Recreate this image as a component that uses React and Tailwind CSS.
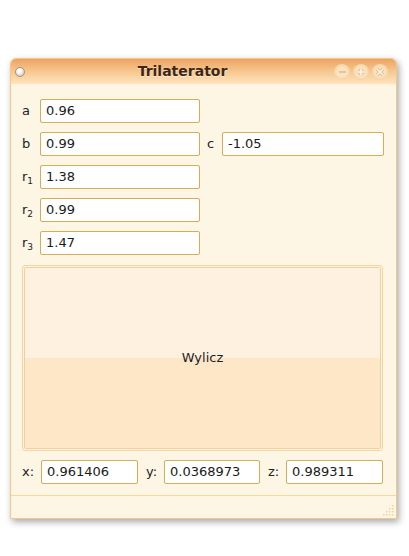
import React from "react";

const Field = ({ value, className = "" }) => (
  <div
    className={`h-[24px] flex items-center px-[5px] bg-white border border-[#d8ac55] rounded-[2px] text-[13px] text-[#1a1a1a] ${className}`}
  >
    {value}
  </div>
);

const Label = ({ children, className = "" }) => (
  <div className={`text-[13px] text-[#222] ${className}`}>{children}</div>
);

const Sub = ({ n }) => <span className="text-[9px] relative top-[3px]">{n}</span>;

const TitleButton = ({ children }) => (
  <div className="w-[16px] h-[16px] rounded-full flex items-center justify-center bg-[radial-gradient(circle,#fbe3c0_40%,#f2c48e_100%)] text-[#fff7ea]">
    {children}
  </div>
);

const App = () => {
  return (
    <div className="w-[409px] h-[556px] bg-white pt-[58px] pl-[10px]" style={{ fontFamily: '"DejaVu Sans", Verdana, sans-serif' }}>
      <div className="w-[387px] h-[461px] flex flex-col border border-[#f6c888] rounded-t-[6px] bg-[#fef6e5] shadow-[2px_3px_7px_rgba(0,0,0,0.35)] overflow-hidden">
        {/* title bar */}
        <div className="h-[26px] flex items-center bg-gradient-to-b from-[#eea264] via-[#f6c88f] to-[#fde4c0] border-b border-[#fff1dc]">
          <div className="w-[20px] pl-[4px] flex items-center">
            <div className="w-[10px] h-[10px] rounded-full bg-[radial-gradient(circle_at_40%_35%,#ffffff_20%,#c9b9a8_100%)] border border-[#a8917a]" />
          </div>
          <div className="flex-1 text-center text-[14px] font-bold text-[#3d2616] [text-shadow:0_1px_0_rgba(255,240,220,0.8)]">
            Trilaterator
          </div>
          <div className="w-[62px] flex items-center gap-[3px] pr-[4px]">
            <TitleButton>
              <div className="w-[7px] h-[2px] bg-[#fff6e8] border border-[#e8c49a]" />
            </TitleButton>
            <TitleButton>
              <svg width="10" height="10" viewBox="0 0 10 10">
                <path d="M5 1.5V8.5M1.5 5H8.5" stroke="#e4b887" strokeWidth="3.2" />
                <path d="M5 1.5V8.5M1.5 5H8.5" stroke="#fff8ec" strokeWidth="1.6" />
              </svg>
            </TitleButton>
            <TitleButton>
              <svg width="10" height="10" viewBox="0 0 10 10">
                <path d="M2 2L8 8M8 2L2 8" stroke="#e4b887" strokeWidth="3.2" />
                <path d="M2 2L8 8M8 2L2 8" stroke="#fff8ec" strokeWidth="1.6" />
              </svg>
            </TitleButton>
          </div>
        </div>

        {/* body */}
        <div className="flex-1 flex flex-col pt-[14px] pl-[11px] gap-[9px]">
          <div className="flex items-center">
            <Label className="w-[18px]">a</Label>
            <Field value="0.96" className="w-[160px]" />
          </div>
          <div className="flex items-center">
            <Label className="w-[18px]">b</Label>
            <Field value="0.99" className="w-[160px]" />
            <Label className="w-[22px] pl-[7px]">c</Label>
            <Field value="-1.05" className="w-[162px]" />
          </div>
          <div className="flex items-center">
            <Label className="w-[18px]">r<Sub n="1" /></Label>
            <Field value="1.38" className="w-[160px]" />
          </div>
          <div className="flex items-center">
            <Label className="w-[18px]">r<Sub n="2" /></Label>
            <Field value="0.99" className="w-[160px]" />
          </div>
          <div className="flex items-center">
            <Label className="w-[18px]">r<Sub n="3" /></Label>
            <Field value="1.47" className="w-[160px]" />
          </div>

          {/* button */}
          <div className="mt-[1px] w-[361px] h-[186px] border border-[#f5d6a3] rounded-[3px] p-[1px] bg-[#fdf3e2]">
            <div className="h-full flex flex-col border border-[#f3cf9c] rounded-[2px] relative">
              <div className="flex-1 bg-[#fef1e0]" />
              <div className="flex-1 bg-[#fde7c6]" />
              <div className="absolute inset-0 flex items-center justify-center text-[13px] text-[#1e1e1e]">
                Wylicz
              </div>
            </div>
          </div>

          <div className="flex items-center">
            <Label className="w-[19px]">x:</Label>
            <Field value="0.961406" className="w-[97px]" />
            <Label className="w-[26px] pl-[8px]">y:</Label>
            <Field value="0.0368973" className="w-[96px]" />
            <Label className="w-[26px] pl-[8px]">z:</Label>
            <Field value="0.989311" className="w-[97px]" />
          </div>
        </div>

        {/* status bar */}
        <div className="h-[23px] border-t border-[#f6d9a0] flex justify-end items-end pr-[2px] pb-[2px]">
          <svg width="11" height="11" viewBox="0 0 11 11">
            {[[9, 1], [9, 4], [6, 4], [9, 7], [6, 7], [3, 7], [9, 10], [6, 10], [3, 10], [0, 10]].map(([x, y], i) => (
              <rect key={i} x={x} y={y - 1} width="1.5" height="1.5" fill="#f0d29a" />
            ))}
          </svg>
        </div>
      </div>
    </div>
  );
};

export default App;
